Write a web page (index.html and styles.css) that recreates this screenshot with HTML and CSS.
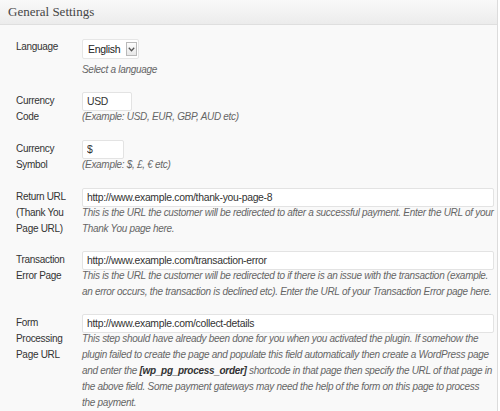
FILE: index.html
```html
<!DOCTYPE html>
<html lang="en">
<head>
  <meta charset="UTF-8" />
  <title>General Settings</title>
  <link rel="stylesheet" href="styles.css">
</head>
<body>
  <div class="postbox">
    <h3 class="hndle">General Settings</h3>

    <table class="form-table">
      <tr>
        <th>Language</th>
        <td>
          <div class="select">
            <span class="select-value">English</span>
            <span class="select-btn">
              <svg width="7" height="5" viewBox="0 0 7 5"><path d="M0.8 0.8 L3.5 3.8 L6.2 0.8" fill="none" stroke="#555" stroke-width="1.3"/></svg>
            </span>
          </div>
          <p class="description first">Select a language</p>
        </td>
      </tr>
      <tr class="short">
        <th>Currency Code</th>
        <td>
          <input class="field code" type="text" value="USD">
          <p class="description">(Example: USD, EUR, GBP, AUD etc)</p>
        </td>
      </tr>
      <tr class="short">
        <th>Currency Symbol</th>
        <td>
          <input class="field symbol" type="text" value="$">
          <p class="description">(Example: $, £, € etc)</p>
        </td>
      </tr>
      <tr>
        <th>Return URL (Thank You Page URL)</th>
        <td>
          <input class="field wide" type="text" value="http://www.example.com/thank-you-page-8">
          <p class="description">This is the URL the customer will be redirected to after a successful payment. Enter the URL of your Thank You page here.</p>
        </td>
      </tr>
      <tr>
        <th>Transaction Error Page</th>
        <td>
          <input class="field wide" type="text" value="http://www.example.com/transaction-error">
          <p class="description">This is the URL the customer will be redirected to if there is an issue with the transaction (example. an error occurs, the transaction is declined etc). Enter the URL of your Transaction Error page here.</p>
        </td>
      </tr>
      <tr>
        <th>Form Processing Page URL</th>
        <td>
          <input class="field wide" type="text" value="http://www.example.com/collect-details">
          <p class="description">This step should have already been done for you when you activated the plugin. If somehow the plugin failed to create the page and populate this field automatically then create a WordPress page and enter the <strong>[wp_pg_process_order]</strong> shortcode in that page then specify the URL of that page in the above field. Some payment gateways may need the help of the form on this page to process the payment.</p>
        </td>
      </tr>
    </table>
  </div>
</body>
</html>
```

FILE: styles.css
```css
* { margin: 0; padding: 0; box-sizing: border-box; }

body {
  background: #fff;
  font-family: 'Liberation Sans', Arial, sans-serif;
  font-size: 10px;
  letter-spacing: -0.3px;
  color: #333;
}

.postbox {
  width: 498px;
  height: 411px;
  background: #f9f9f9;
  border-right: 1px solid #dcdcdc;
  overflow: hidden;
}

.hndle {
  height: 25px;
  padding: 4px 8px 0;
  font-family: 'Liberation Serif', 'Times New Roman', serif;
  font-size: 13px;
  letter-spacing: 0;
  font-weight: normal;
  color: #464646;
  background: linear-gradient(#f9f9f9, #ececec);
  border-bottom: 1px solid #dfdfdf;
}

.form-table {
  border-collapse: collapse;
  margin: 14px 0 0 16px;
}

.form-table th,
.form-table td {
  vertical-align: top;
  padding: 0 0 15px;
  line-height: 16px;
}

.form-table .short th,
.form-table .short td {
  padding-bottom: 16px;
}

.form-table th {
  width: 66px;
  padding-right: 4px;
  text-align: left;
  font-weight: normal;
  color: #333;
}

.form-table td {
  width: 412px;
}

.field {
  display: block;
  height: 19px;
  margin: -1px 0 -2px;
  padding: 0 4px;
  font-family: 'Liberation Sans', Arial, sans-serif;
  font-size: 10.4px;
  letter-spacing: -0.3px;
  color: #333;
  background: #fff;
  border: 1px solid #e3e3e3;
  border-radius: 2px;
  outline: none;
}

.field.code { width: 50px; }
.field.symbol { width: 42px; }
.field.wide { width: 412px; }

.select {
  display: flex;
  align-items: center;
  width: 57px;
  height: 20px;
  padding: 0 1px 0 5px;
  background: #fff;
  border: 1px solid #e6e6e6;
  border-radius: 2px;
  font-size: 10.5px;
  color: #222;
}

.select-value { flex: 1; }

.select-btn {
  display: flex;
  align-items: center;
  justify-content: center;
  width: 11px;
  height: 14px;
  border: 1px solid #b9b9b9;
  background: linear-gradient(#fdfdfd, #e8e8e8);
}

.description {
  font-style: italic;
  color: #666;
}

.description.first { margin-top: 3px; }

.description strong {
  color: #333;
}
```
